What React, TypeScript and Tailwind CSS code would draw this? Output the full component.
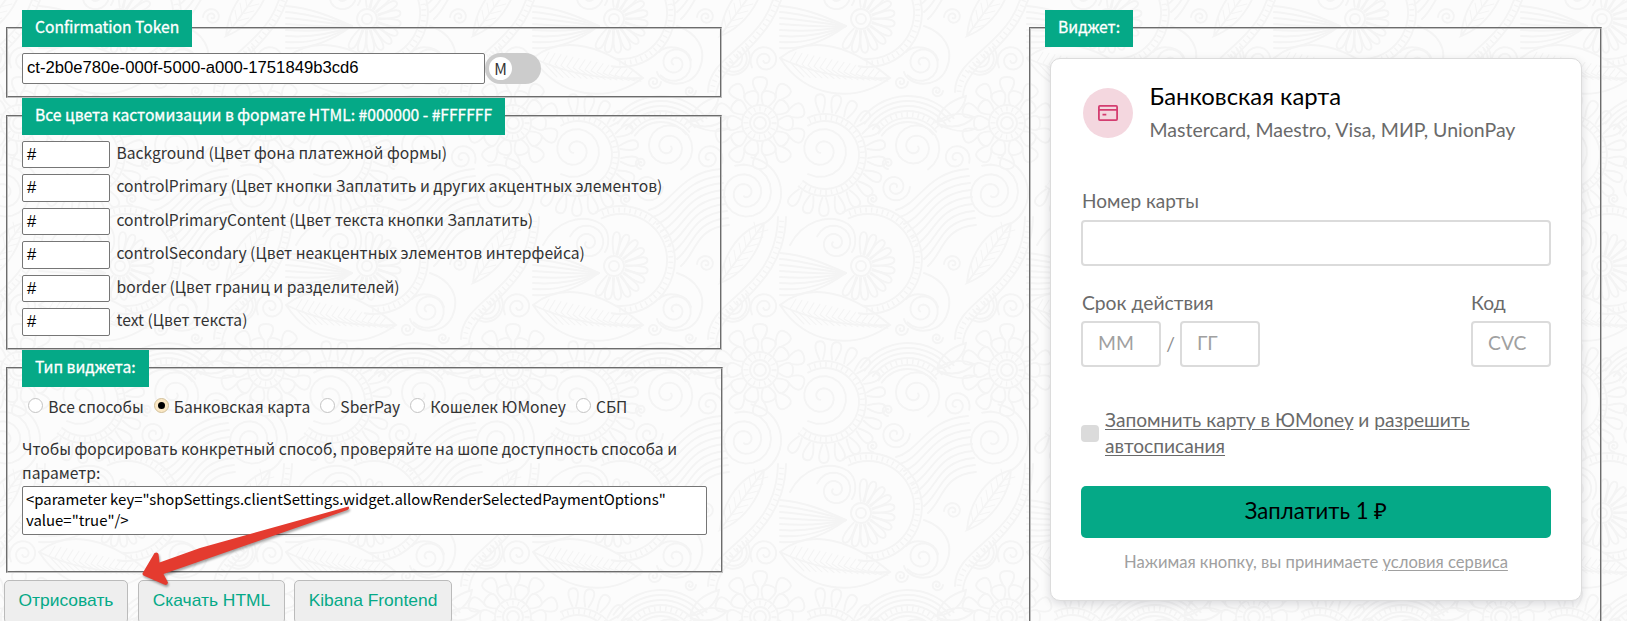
import React from "react";

const TILE = 247;

function spiral(cx: number, cy: number, r: number, turns: number, start: number, dir = 1) {
  const steps = Math.round(turns * 20);
  let d = "";
  for (let i = 0; i <= steps; i++) {
    const t = i / steps;
    const a = (start * Math.PI) / 180 + dir * t * turns * 2 * Math.PI;
    const q = r * (1 - t * 0.88);
    d += `${i ? "L" : "M"}${(cx + q * Math.cos(a)).toFixed(1)} ${(cy + q * Math.sin(a)).toFixed(1)}`;
  }
  return d;
}

function arc(cx: number, cy: number, r: number, a0: number, a1: number) {
  const p = (a: number) =>
    `${(cx + r * Math.cos((a * Math.PI) / 180)).toFixed(1)} ${(cy + r * Math.sin((a * Math.PI) / 180)).toFixed(1)}`;
  return `M${p(a0)}A${r} ${r} 0 ${a1 - a0 > 180 ? 1 : 0} 1 ${p(a1)}`;
}

type PetalsProps = { cx: number; cy: number; r0: number; r1: number; from: number; to: number; n: number; w: number };

function Petals({ cx, cy, r0, r1, from, to, n, w }: PetalsProps) {
  return (
    <>
      {Array.from({ length: n }, (_, i) => {
        const a = from + ((to - from) * i) / Math.max(1, n - 1);
        const m = (r0 + r1) / 2 + 2;
        return (
          <path
            key={i}
            transform={`translate(${cx} ${cy}) rotate(${a})`}
            d={`M${r0} ${-w * 0.3}C${m} ${-w} ${r1} ${-w} ${r1} 0C${r1} ${w} ${m} ${w} ${r0} ${w * 0.3}`}
          />
        );
      })}
    </>
  );
}

function Motif() {
  return (
    <g id="motif" fill="none" stroke="#f4f4f4" strokeWidth="1.9" strokeLinecap="round">
      <circle cx="131" cy="19" r="5" />
      <circle cx="131" cy="19" r="10" />
      <Petals cx={131} cy={19} r0={12} r1={34} from={-85} to={120} n={12} w={4.5} />
      <path d={arc(138, 13, 46, -115, 95)} />
      <path d={arc(138, 13, 54, -118, 100)} />
      <path d={arc(138, 13, 50, -112, 92)} strokeWidth="5" strokeDasharray="1.5 4" strokeLinecap="butt" />
      {[0, 1, 2, 3, 4, 5, 6, 7].map((i) => (
        <path key={i} d={`M116 26C98 ${18 + i * 3} 76 ${8 + i * 6} 50 ${6 + i * 6}`} />
      ))}
      <path d={spiral(105, 243, 19, 2, 200)} />
      <path d="M60 245C72 222 98 212 118 224C128 232 126 246 122 252" />
      <path d={spiral(192, 63, 19, 2, 140, -1)} />
      <path d="M174 72C178 86 206 90 216 70C226 48 212 32 194 26" />
      <path d="M176 52C184 44 204 46 208 60" />
      <path d={spiral(223, 17, 9, 1.8, 180)} />
      <path d={spiral(35, 60, 15, 2, 150)} />
      <path d={spiral(171, 82, 7, 1.6, 0)} />
      <path d={spiral(207, 91, 6, 1.6, 0)} />
      <path d={spiral(158, 163, 6, 1.6, 90)} />
      <path d={spiral(143, 199, 6, 1.6, 90)} />
      <path d="M50 58C72 40 110 36 160 78C124 104 76 98 50 58ZM50 58C84 74 122 80 160 78" />
      {Array.from({ length: 15 }, (_, i) => (
        <path key={i} d={`M${60 + i * 6} ${62 + i * 1.1}l14 ${15 - i * 0.8}M${60 + i * 6} ${62 + i * 1.1}l6 ${-10 + i * 0.2}`} strokeWidth="1.1" />
      ))}
      <circle cx="30" cy="123" r="6" />
      <circle cx="30" cy="123" r="10" />
      <circle cx="30" cy="123" r="18" />
      <circle cx="30" cy="123" r="14" strokeWidth="5" strokeDasharray="1.4 4" strokeLinecap="butt" />
      <Petals cx={30} cy={123} r0={18} r1={33} from={0} to={324} n={10} w={9} />
      <Petals cx={30} cy={123} r0={30} r1={46} from={18} to={342} n={10} w={9} />
      <path d={spiral(92, 150, 28, 2, 120, -1)} />
      <path d={arc(95, 155, 34, -120, 130)} />
      <path d={arc(95, 155, 41, -115, 130)} />
      <path d={arc(95, 155, 37.5, -115, 130)} strokeWidth="5" strokeDasharray="1.5 4" strokeLinecap="butt" />
      <Petals cx={95} cy={155} r0={43} r1={61} from={-95} to={125} n={14} w={6} />
      <path d={spiral(185, 147, 26, 2.2, 60, -1)} />
      {[32, 36, 43, 48, 53, 58].map((r) => (
        <path key={r} d={arc(178, 154, r, -145, -38)} />
      ))}
      <path d={arc(178, 154, 39.5, -140, -40)} strokeWidth="5" strokeDasharray="1.5 4" strokeLinecap="butt" />
      <path d={spiral(165, 187, 15, 2, 0)} />
      <path d={spiral(226, 158, 14, 1.8, 20, -1)} />
      <path d={spiral(15, 193, 29, 2.6, 250)} />
      <path d={arc(15, 193, 36, -80, 60)} />
      {[0, 1, 2, 3, 4, 5, 6, 7, 8].map((i) => (
        <path key={i} d={`M${166 + i * 4} ${210 + i * 7}C${190 + i * 3} ${204 + i * 6} ${196 + i * 2} ${172 + i * 7} ${238 + i} ${169 + i * 7}`} />
      ))}
      <path d="M207 122C210 108 222 100 236 96C234 110 222 120 207 122C220 112 232 112 244 117C234 128 220 128 207 124C220 130 236 134 246 128" />
      <path d="M-10 36C-8 12 6 -16 34 -24C32 4 12 28 -10 36L34 -24" />
      {[0, 1, 2, 3, 4, 5, 6].map((i) => (
        <path key={i} d={`M${-4 + i * 5} ${28 - i * 7}l12 -3M${-4 + i * 5} ${28 - i * 7}l-2 -11`} strokeWidth="1.1" />
      ))}
      <path d="M-22 92C-22 50 46 46 48 -30M-14 96C-12 58 54 44 56 -30" />
      <path d="M-18 92C-16 54 50 46 52 -30" strokeWidth="5" strokeDasharray="1.4 4" strokeLinecap="butt" />
      {[5, 9, 13, 17].map((r) => (
        <path key={r} d={arc(3, 58, r, -40, 130)} />
      ))}
    </g>
  );
}

function Backdrop() {
  const shifts = [-TILE, 0, TILE];
  return (
    <svg className="pointer-events-none absolute inset-0 h-full w-full" aria-hidden="true">
      <defs>
        <pattern id="paisley" width={TILE} height={TILE} patternUnits="userSpaceOnUse" patternTransform="translate(-11 0)">
          <Motif />
          {shifts.map((x) =>
            shifts.map((y) => (x || y ? <use key={`${x},${y}`} href="#motif" x={x} y={y} /> : null)),
          )}
        </pattern>
      </defs>
      <rect width="100%" height="100%" fill="url(#paisley)" />
    </svg>
  );
}

const sans = "font-['Noto_Sans_CJK_SC','Noto_Sans',sans-serif]";
const arial = "font-['Liberation_Sans',Arial,sans-serif]";
const fieldset = "border-2 [border-style:groove] border-[#c0c0c0] px-[14px]";
const legend =
  "h-[36.5px] bg-[#05a987] px-[13px] text-[15.64px] leading-[34px] text-white whitespace-nowrap [-webkit-text-stroke:0.3px_white]";
const box = "border border-[#767676] rounded-[2px] bg-white text-black";

const colors = [
  "Background (Цвет фона платежной формы)",
  "controlPrimary (Цвет кнопки Заплатить и других акцентных элементов)",
  "controlPrimaryContent (Цвет текста кнопки Заплатить)",
  "controlSecondary (Цвет неакцентных элементов интерфейса)",
  "border (Цвет границ и разделителей)",
  "text (Цвет текста)",
];

const methods = ["Все способы", "Банковская карта", "SberPay", "Кошелек ЮMoney", "СБП"];

function Radio({ label, checked }: { label: string; checked: boolean }) {
  return (
    <label className="flex items-start">
      <span
        className={
          checked
            ? "flex size-[15px] items-center justify-center rounded-full border border-[#d0bf9a] bg-[#fbe8c4]"
            : "flex size-[15px] items-center justify-center rounded-full border border-[#c4c4c4] bg-white"
        }
      >
        {checked && <span className="size-[7px] rounded-full bg-black" />}
      </span>
      <span className="ml-[5.3px] pt-[1.5px] leading-[16px]">{label}</span>
    </label>
  );
}

function Arrow() {
  return (
    <svg className="absolute left-[136px] top-[500px] drop-shadow-[1px_2px_1px_rgba(0,0,0,0.35)]" width="220" height="92" viewBox="136 500 220 92">
      <path
        d="M348.500 506.500Q350 508.500 347.500 510L163.500 574L168 582.500Q167.500 586 164 584.500L143.500 575.500Q141.800 574 143 572.500L154.500 553Q157.500 551.500 158.500 554L159.500 562.500L200 548Z"
        fill="#e43b2f"
      />
    </svg>
  );
}

function CardField({ children, wide }: { children?: React.ReactNode; wide?: boolean }) {
  return (
    <div
      className={
        wide
          ? "h-[46px] w-full rounded-[4px] border-2 border-[#dbdbdb] bg-white"
          : "flex h-[46px] w-20 items-center rounded-[4px] border-2 border-[#dbdbdb] bg-white pb-[2px] pl-[15px] text-[19.3px] text-[#a0a0a0]"
      }
    >
      {children}
    </div>
  );
}

function PaymentCard() {
  return (
    <div className="ml-[5px] mt-[11.5px] flex h-[543px] w-[532px] flex-col rounded-[10px] border border-[#dcdcdc] bg-white px-[30px] font-[Lato,sans-serif] text-[19.3px] text-[#6a6a6a] shadow-[0_3px_10px_rgba(0,0,30,0.14)]">
      <div className="mt-[29px] flex pl-[2px]">
        <div className="flex size-[50px] items-center justify-center rounded-full bg-[#f4d7df]">
          <svg width="20" height="16" viewBox="0 0 20 16" fill="none" stroke="#d43d70" strokeWidth="1.8">
            <rect x="0.9" y="0.9" width="18.200" height="14.200" rx="1" />
            <path d="M1 4.900H19M4.500 9.700H8.300" />
          </svg>
        </div>
        <div className="ml-[16.5px] whitespace-nowrap">
          <div className="-mt-[6px] text-[23.83px] leading-[28px] text-black">Банковская карта</div>
          <div className="mt-[8px] text-[19.52px] leading-6">Mastercard, Maestro, Visa, МИР, UnionPay</div>
        </div>
      </div>

      <div className="mt-[47px] leading-6">
        <div className="pl-px text-[19px]">Номер карты</div>
        <div className="mt-[7px]">
          <CardField wide />
        </div>
      </div>

      <div className="mt-[25px] flex justify-between leading-6">
        <div>
          <div className="pl-px">Срок действия</div>
          <div className="mt-[6px] flex items-center">
            <CardField>ММ</CardField>
            <span className="w-[19px] text-center text-[#8e8e8e]">/</span>
            <CardField>ГГ</CardField>
          </div>
        </div>
        <div>
          <div>Код</div>
          <div className="mt-[6px]">
            <CardField>CVC</CardField>
          </div>
        </div>
      </div>

      <div className="mt-[40px] flex items-center">
        <span className="mt-px h-[17px] w-[18px] rounded-[4px] bg-[#dbdbdb]" />
        <p className="ml-[6px] w-[400px] text-[19.18px] leading-[26px] underline-offset-[2px]">
          <a className="underline">Запомнить карту в ЮMoney</a> и <a className="underline">разрешить автосписания</a>
        </p>
      </div>

      <div className="mt-[26.500px] flex h-[52px] items-center justify-center rounded-[5px] bg-[#05a987] pb-[2px] text-[22.13px] text-black">
        Заплатить 1 ₽
      </div>
      <p className="mt-[12.5px] text-center text-[16.62px] leading-6 text-[#a0a0a0] underline-offset-[2px]">
        Нажимая кнопку, вы принимаете <a className="underline">условия сервиса</a>
      </p>
    </div>
  );
}

export default function App() {
  return (
    <main className={`relative flex h-[621px] w-[1627px] overflow-hidden bg-[#fcfcfc] text-[15.65px] text-[#333] ${sans}`}>
      <Backdrop />
      <section className="relative w-[1029px] pt-[10px]">
        <fieldset className={`ml-[6px] h-[88px] w-[716px] ${fieldset}`}>
          <legend className={legend}>Confirmation Token</legend>
          <div className="mt-[6.5px] flex">
            <div className={`h-[31px] w-[463px] pl-1 text-[16.67px] leading-[28px] ${box} ${arial}`}>
              ct-2b0e780e-000f-5000-a000-1751849b3cd6
            </div>
            <div className="flex h-[31px] w-[56px] items-center rounded-full bg-[#ccc] pl-[4px]">
              <span className="flex size-[23px] items-center justify-center rounded-full bg-white pt-px text-[15.6px]">M</span>
            </div>
          </div>
        </fieldset>

        <fieldset className={`ml-[6px] h-[252px] w-[716px] ${fieldset}`}>
          <legend className={legend}>Все цвета кастомизации в формате HTML: #000000 - #FFFFFF</legend>
          <div className="mt-[6px] flex flex-col gap-[6.1px]">
            {colors.map((c) => (
              <div key={c} className="flex h-[27.5px]">
                <span className={`h-[27.5px] w-[88px] pl-1 text-[16.5px] leading-[24px] ${box} ${arial}`}>#</span>
                <span className="ml-[6.5px] leading-[23px]">{c}</span>
              </div>
            ))}
          </div>
        </fieldset>

        <fieldset className={`ml-[6px] h-[223px] w-[716px] ${fieldset}`}>
          <legend className={legend}>Тип виджета:</legend>
          <div className="mt-[11px] flex h-[17px] gap-[9.7px] pl-[6px]">
            {methods.map((m, i) => (
              <Radio key={m} label={m} checked={i === 1} />
            ))}
          </div>
          <p className="mt-[22.5px] leading-6">
            Чтобы форсировать конкретный способ, проверяйте на шопе доступность способа и параметр:
          </p>
          <div className={`mt-px h-[49px] w-[685px] px-[3px] pt-px text-[14.92px] leading-[21px] ${box}`}>
            &lt;parameter key="shopSettings.clientSettings.widget.allowRenderSelectedPaymentOptions" value="true"/&gt;
          </div>
        </fieldset>

        <div className={`mt-[7px] flex pl-1 text-[17.42px] text-[#05a987] ${arial}`}>
          <button className="h-[44px] w-[124px] rounded-[5px] border border-[#bbb] bg-[#eee] pb-[3px]">Отрисовать</button>
          <button className="ml-[10px] h-[44px] w-[147px] rounded-[5px] border border-[#bbb] bg-[#eee] pb-[3px]">Скачать HTML</button>
          <button className="ml-[9px] h-[44px] w-[158px] rounded-[5px] border border-[#bbb] bg-[#eee] pb-[3px]">Kibana Frontend</button>
        </div>
      </section>

      <section className="relative pt-[10px]">
        <fieldset className={`h-[640px] w-[573px] ${fieldset}`}>
          <legend className={legend}>Виджет:</legend>
          <PaymentCard />
        </fieldset>
      </section>
      <Arrow />
    </main>
  );
}
